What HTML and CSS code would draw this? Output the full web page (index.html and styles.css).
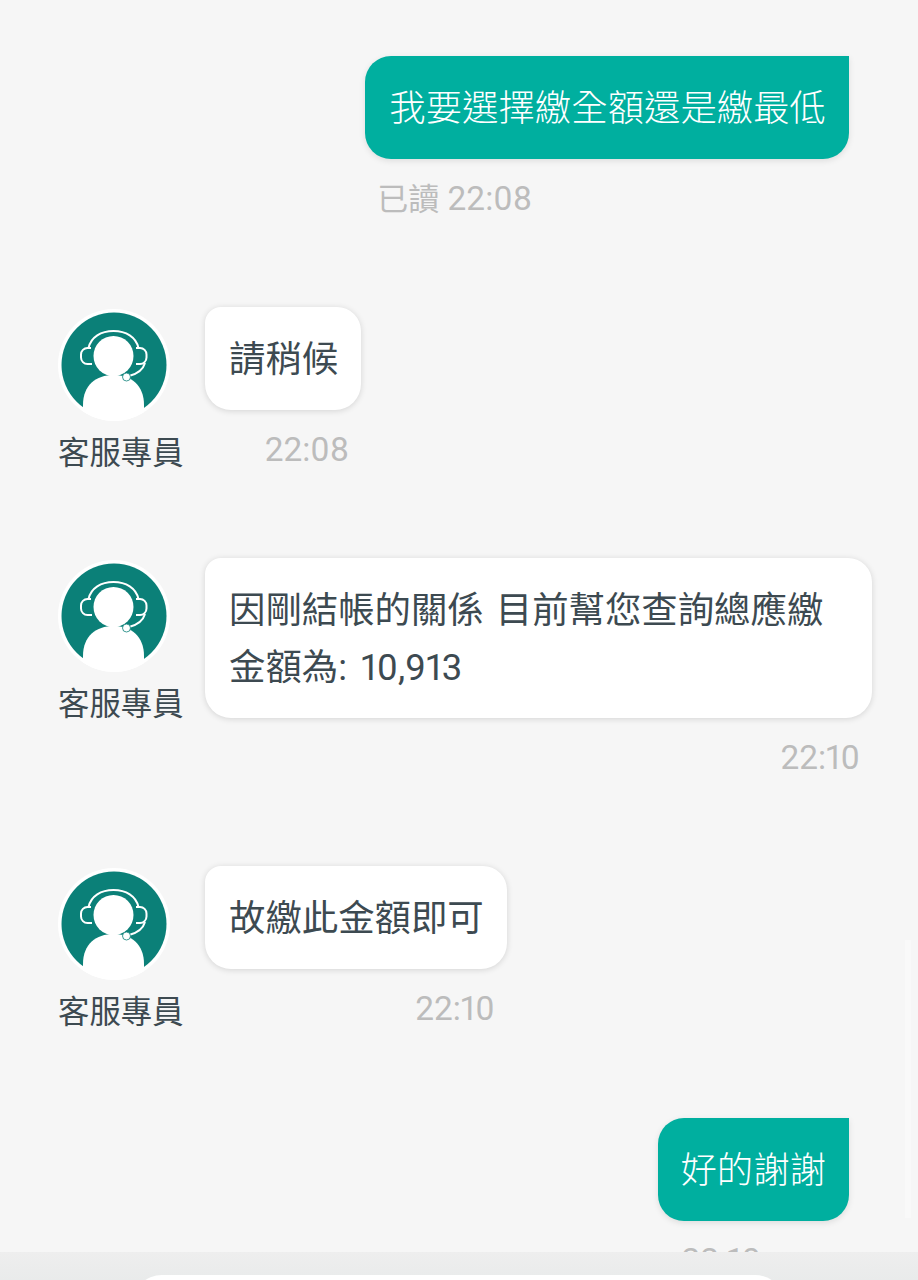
FILE: index.html
```html
<!DOCTYPE html>
<html lang="zh-Hant">
<head>
<meta charset="utf-8">
<title>客服對話</title>
<link rel="stylesheet" href="styles.css">
</head>
<body>
<svg class="defs" width="0" height="0" aria-hidden="true">
  <symbol id="agent-icon" viewBox="0 0 112 112">
    <circle cx="56" cy="56" r="56" fill="#fff"/>
    <circle cx="56" cy="56" r="52.5" fill="#0b8078"/>
    <path d="M25 96C25 76 38 66 55.5 66S86 76 86 96V103.3A56 56 0 0 1 25 102.6Z" fill="#fff"/>
    <circle cx="55.5" cy="47" r="20" fill="#fff"/>
    <path d="M30.5 39C33 28 43 22 55.5 22S78 28 80.5 39" fill="none" stroke="#fff" stroke-width="2"/>
    <path d="M33 39H29.500A6.500 6.500 0 0 0 23 45.500V48.500A6.500 6.500 0 0 0 29.500 55H34" fill="none" stroke="#fff" stroke-width="2"/>
    <path d="M78 39H82A6.500 6.500 0 0 1 88.500 45.500V48.500A6.500 6.500 0 0 1 82 55H78" fill="none" stroke="#fff" stroke-width="2"/>
    <path d="M87 54C85 61 79 65 71 67" fill="none" stroke="#fff" stroke-width="2"/>
    <circle cx="68.500" cy="68" r="4" fill="#fff" stroke="#0b8078" stroke-width=".8"/>
  </symbol>
</svg>
<div class="screen">
  <main class="chat">
    <div class="scroll-thumb"></div>
    <section class="msg msg-out">
      <div>
        <div class="bubble bubble-out">我要選擇繳全額還是繳最低</div>
        <div class="time time-out"><span class="read">已讀</span> 22:08</div>
      </div>
    </section>

    <section class="msg gap-a">
      <div class="agent">
        <svg class="avatar" aria-hidden="true"><use href="#agent-icon"/></svg>
        <div class="agent-name">客服專員</div>
      </div>
      <div>
        <div class="bubble bubble-in">請稍候</div>
        <div class="time time-in">22:08</div>
      </div>
    </section>

    <section class="msg gap-b">
      <div class="agent">
        <svg class="avatar" aria-hidden="true"><use href="#agent-icon"/></svg>
        <div class="agent-name">客服專員</div>
      </div>
      <div>
        <div class="bubble bubble-in bubble-wide">因剛結帳的關係 目前幫您查詢總應繳<br>金額為:<span class="num"> 10,913</span></div>
        <div class="time time-in">22:10</div>
      </div>
    </section>

    <section class="msg gap-c">
      <div class="agent">
        <svg class="avatar" aria-hidden="true"><use href="#agent-icon"/></svg>
        <div class="agent-name">客服專員</div>
      </div>
      <div>
        <div class="bubble bubble-in">故繳此金額即可</div>
        <div class="time time-in">22:10</div>
      </div>
    </section>

    <section class="msg msg-out gap-d">
      <div>
        <div class="bubble bubble-out bubble-short">好的謝謝</div>
        <div class="time time-out time-last">22:10</div>
      </div>
    </section>
  </main>
  <footer class="composer"><div class="composer-input"></div></footer>
</div>
</body>
</html>
```
FILE: styles.css
```css
* { box-sizing: border-box; }
html, body { margin: 0; padding: 0; }
body {
  background: #f6f6f6;
  font-family: Roboto, "Noto Sans CJK TC", sans-serif;
  font-variant-numeric: proportional-nums;
  color: #33424a;
}
.defs { position: absolute; }
.screen {
  width: 918px;
  height: 1280px;
  display: flex;
  flex-direction: column;
  overflow: hidden;
}
.chat {
  position: relative;
  flex: 1;
  min-height: 0;
  overflow: hidden;
  padding: 56px 0 0 58px;
  display: flex;
  flex-direction: column;
}
.scroll-thumb {
  position: absolute;
  top: 940px;
  right: 7px;
  width: 6px;
  height: 278px;
  background: #f9f9f9;
}
.msg { display: flex; flex-shrink: 0; align-items: flex-start; }
.msg-out { justify-content: flex-end; padding-right: 69px; }
.gap-a { margin-top: 87px; }
.gap-b { margin-top: 84px; }
.gap-c { margin-top: 88px; }
.gap-d { margin-top: 85px; }

.bubble {
  font-size: 36.4px;
  line-height: 57px;
  padding: 24px 23px 22px 24px;
  white-space: nowrap;
  font-weight: 400;
}
.bubble-out {
  background: #00af9f;
  color: #fff;
  font-weight: 300;
  border-radius: 26px 0 26px 26px;
  box-shadow: 0 2px 6px rgba(0, 0, 0, .1);
}
.bubble-short { padding-left: 22px; }
.bubble-in {
  background: #fff;
  color: #3d4a51;
  border-radius: 16px 24px 26px 26px;
  box-shadow: 0 1px 6px rgba(0, 0, 0, .14);
}
.bubble-wide { width: 667px; word-spacing: 3px; }
.num { margin-left: 2px; }
.time {
  font-size: 33.4px;
  line-height: 40px;
  color: #bcbcbc;
  margin-top: 20px;
  font-weight: 400;
}
.read { font-size: 31px; }
.time-out { padding-left: 12px; }
.time-last { padding-left: 23px; }
.time-in { text-align: right; padding-right: 12px; }

.agent {
  width: 147px;
  flex-shrink: 0;
  display: flex;
  flex-direction: column;
}
.avatar {
  width: 112px;
  height: 112px;
  display: block;
  margin-top: 2px;
}
.agent-name {
  font-size: 31.4px;
  line-height: 40px;
  margin-top: 13px;
  color: #3d4a51;
  white-space: nowrap;
  font-weight: 400;
}
.composer {
  height: 28px;
  flex-shrink: 0;
  background: linear-gradient(#eeeeee, #e9ebeb);
  padding: 23px 133px 0 132px;
  position: relative;
  z-index: 1;
}
.composer-input {
  height: 40px;
  background: #fff;
  border-radius: 30px 30px 0 0;
}
```
